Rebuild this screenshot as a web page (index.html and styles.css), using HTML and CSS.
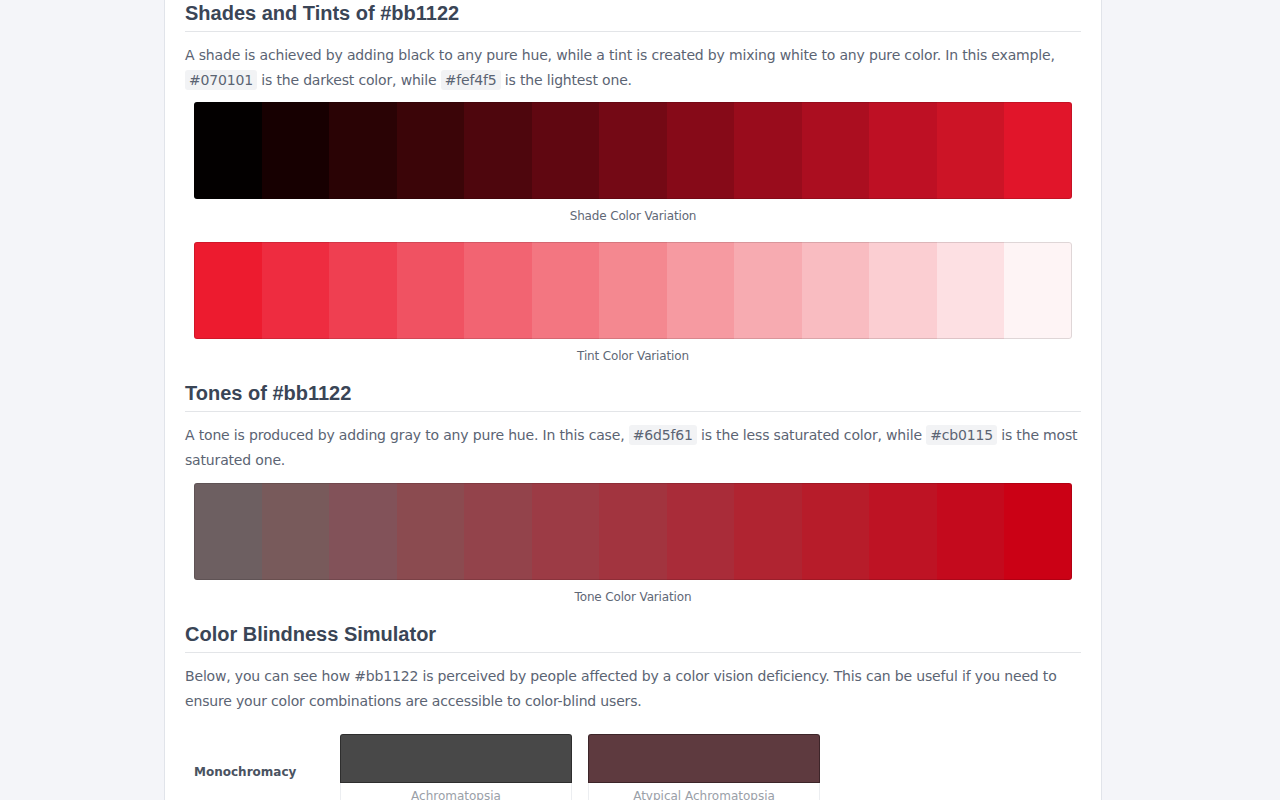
FILE: index.html
```html
<!DOCTYPE html>
<html lang="en">
<head>
<meta charset="utf-8">
<title>#bb1122</title>
<link rel="stylesheet" href="styles.css">
</head>
<body>
<div class="page">
  <section class="block">
    <h2 class="title">Shades and Tints of #bb1122</h2>
    <p class="text">A shade is achieved by adding black to any pure hue, while a tint is created by mixing white to any pure color. In this example, <code class="pill">#070101</code> is the darkest color, while <code class="pill">#fef4f5</code> is the lightest one.</p>
    <div class="strip">
      <span class="sw" style="background:#030000"></span>
      <span class="sw" style="background:#170001"></span>
      <span class="sw" style="background:#2a0305"></span>
      <span class="sw" style="background:#3b0508"></span>
      <span class="sw" style="background:#4e060d"></span>
      <span class="sw" style="background:#600711"></span>
      <span class="sw" style="background:#740915"></span>
      <span class="sw" style="background:#860a18"></span>
      <span class="sw" style="background:#990c1c"></span>
      <span class="sw" style="background:#ab0e20"></span>
      <span class="sw" style="background:#be1024"></span>
      <span class="sw" style="background:#cc1426"></span>
      <span class="sw" style="background:#e1152a"></span>
    </div>
    <div class="caption">Shade Color Variation</div>
    <div class="strip strip-next">
      <span class="sw" style="background:#ed1b2f"></span>
      <span class="sw" style="background:#ee2c40"></span>
      <span class="sw" style="background:#ef3f51"></span>
      <span class="sw" style="background:#f05262"></span>
      <span class="sw" style="background:#f26472"></span>
      <span class="sw" style="background:#f37681"></span>
      <span class="sw" style="background:#f48890"></span>
      <span class="sw" style="background:#f69aa1"></span>
      <span class="sw" style="background:#f7abb1"></span>
      <span class="sw" style="background:#f9bcc1"></span>
      <span class="sw" style="background:#fbced2"></span>
      <span class="sw" style="background:#fde0e3"></span>
      <span class="sw" style="background:#fef4f5"></span>
    </div>
    <div class="caption">Tint Color Variation</div>
  </section>

  <section class="block">
    <h2 class="title">Tones of #bb1122</h2>
    <p class="text">A tone is produced by adding gray to any pure hue. In this case, <code class="pill">#6d5f61</code> is the less saturated color, while <code class="pill">#cb0115</code> is the most saturated one.</p>
    <div class="strip strip-tone">
      <span class="sw" style="background:#6d5f61"></span>
      <span class="sw" style="background:#785a5b"></span>
      <span class="sw" style="background:#825259"></span>
      <span class="sw" style="background:#8b4b50"></span>
      <span class="sw" style="background:#93434b"></span>
      <span class="sw" style="background:#9c3b45"></span>
      <span class="sw" style="background:#a2343f"></span>
      <span class="sw" style="background:#a92c39"></span>
      <span class="sw" style="background:#b02431"></span>
      <span class="sw" style="background:#b71c2a"></span>
      <span class="sw" style="background:#be1324"></span>
      <span class="sw" style="background:#c40a1d"></span>
      <span class="sw" style="background:#cb0115"></span>
    </div>
    <div class="caption">Tone Color Variation</div>
  </section>

  <section class="block">
    <h2 class="title">Color Blindness Simulator</h2>
    <p class="text">Below, you can see how #bb1122 is perceived by people affected by a color vision deficiency. This can be useful if you need to ensure your color combinations are accessible to color-blind users.</p>
    <div class="cb-row">
      <div class="cb-label">Monochromacy</div>
      <div class="cb-cards">
        <div class="card">
          <div class="card-sw" style="background:#484848"></div>
          <div class="card-name">Achromatopsia</div>
        </div>
        <div class="card">
          <div class="card-sw" style="background:#5e3a3f"></div>
          <div class="card-name">Atypical Achromatopsia</div>
        </div>
      </div>
    </div>
  </section>
</div>
</body>
</html>
```
FILE: styles.css
```css
html, body {
  margin: 0;
  padding: 0;
}
body {
  background: #f4f5f9;
  font-family: "DejaVu Sans", Verdana, sans-serif;
  color: #5b6473;
  overflow: hidden;
}
.page {
  width: 938px;
  margin-left: 164px;
  background: #fff;
  border-left: 1px solid #e1e4ea;
  border-right: 1px solid #e1e4ea;
  padding: 0 20px 40px;
  box-sizing: border-box;
  min-height: 800px;
}
.block + .block {
  margin-top: 15px;
}
.title {
  font-family: "Liberation Sans", Arial, sans-serif;
  font-weight: bold;
  font-size: 20px;
  line-height: 24px;
  color: #3a4556;
  margin: 0;
  padding: 1px 0 6px;
  border-bottom: 1px solid #e3e5e8;
}
.text {
  font-size: 14px;
  line-height: 25px;
  letter-spacing: -0.17px;
  margin: 11px 0 0;
}
.pill {
  font-family: inherit;
  font-size: 14px;
  background: #f2f3f5;
  border-radius: 3px;
  padding: 2px 4px;
}
.strip {
  display: flex;
  height: 97px;
  margin: 9px 9px 0;
  border-radius: 3px;
  overflow: hidden;
  position: relative;
}
.strip::after {
  content: "";
  position: absolute;
  inset: 0;
  border-radius: 3px;
  box-shadow: inset 0 0 0 1px rgba(0, 0, 0, 0.12);
  pointer-events: none;
}
.strip-next {
  margin-top: 17px;
}
.strip-tone {
  margin-top: 10px;
}
.sw {
  flex: 1;
}
.caption {
  font-size: 12px;
  line-height: 18px;
  letter-spacing: -0.15px;
  text-align: center;
  color: #5f6876;
  margin-top: 8px;
}
.cb-row {
  display: flex;
  align-items: center;
  margin: 20px 9px 0;
}
.cb-label {
  width: 146px;
  font-size: 12px;
  font-weight: bold;
  color: #4a5361;
}
.cb-cards {
  display: flex;
  gap: 16px;
}
.card {
  width: 232px;
  border: 1px solid #eceef1;
  border-radius: 4px;
  box-sizing: border-box;
}
.card-sw {
  height: 47px;
  margin: -1px -1px 0;
  border: 1px solid rgba(0, 0, 0, 0.35);
  border-radius: 3px 3px 0 0;
}
.card-name {
  font-size: 12px;
  line-height: 26px;
  text-align: center;
  color: #9aa0a8;
}
```
